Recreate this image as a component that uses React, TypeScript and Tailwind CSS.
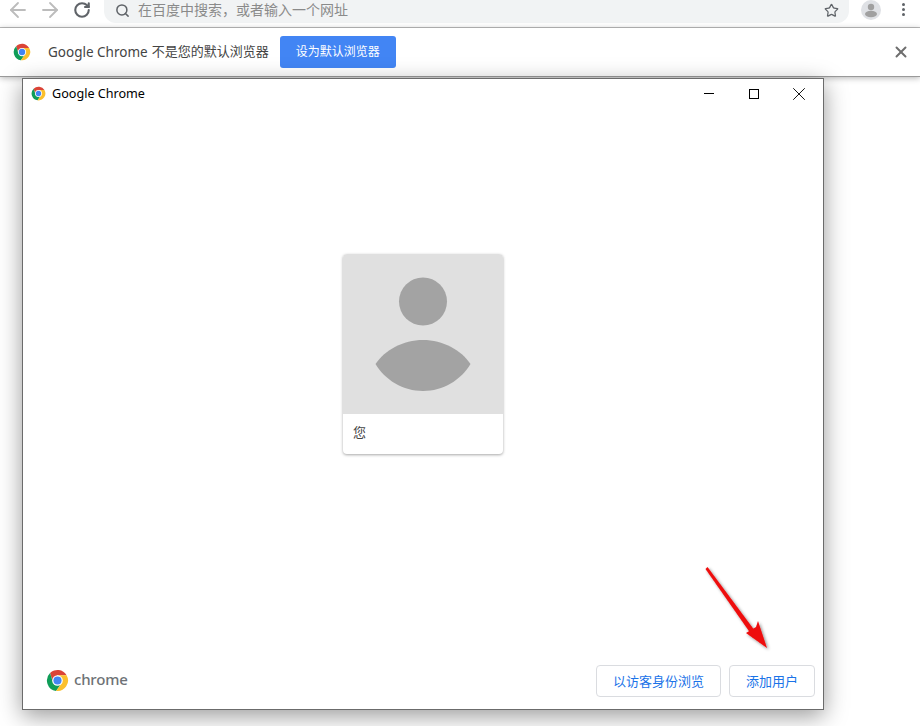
import { ArrowLeft, ArrowRight, RotateCw, Search, Star, X } from 'lucide-react';

const FONT = "font-['Noto_Sans','Noto_Sans_CJK_SC',sans-serif]";

function ChromeLogo({ className }: { className: string }) {
  return (
    <svg viewBox="0 0 48 48" className={className}>
      <path d="M8.4 8.5 A22 22 0 0 1 43 13 L24 13 L15 29 Z" fill="#db4437" />
      <path d="M8.4 8.5 A22 22 0 0 0 21 45.8 L33 29 L15 29 Z" fill="#0f9d58" />
      <path d="M43 13 A22 22 0 0 1 21 45.8 L33 29 L24 13 Z" fill="#fbc02d" />
      <circle cx="24" cy="24" r="11" fill="#fff" />
      <circle cx="24" cy="24" r="8.5" fill="#4285f4" />
    </svg>
  );
}

function Toolbar() {
  return (
    <div className="h-7 shrink-0 flex items-start bg-white border-b border-[#bdbdbd]">
      <div className="w-[104px] h-5 flex items-center pl-[2px]">
        <span className="w-8 flex justify-center">
          <ArrowLeft className="w-6 h-6 shrink-0 text-[#bcbcbc]" strokeWidth={1.8} />
        </span>
        <span className="w-8 flex justify-center">
          <ArrowRight className="w-6 h-6 shrink-0 text-[#bcbcbc]" strokeWidth={1.8} />
        </span>
        <span className="w-8 flex justify-center">
          <RotateCw className="w-[18px] h-[18px] shrink-0 text-[#5f6368]" strokeWidth={2.8} />
        </span>
      </div>
      <div className="w-[745px] h-[23px] bg-[#f1f3f4] rounded-br-[12px] rounded-bl-[12px] flex items-center pl-[11px] pr-[10px] pb-[3px]">
        <Search className="w-[15px] h-[15px] text-[#5f6368]" strokeWidth={2.4} />
        <span className="ml-[8px] text-[14px] leading-[18px] text-[#8a8a8a]">在百度中搜索，或者输入一个网址</span>
        <Star className="ml-auto w-[15px] h-[15px] text-[#5f6368]" strokeWidth={2} />
      </div>
      <div className="flex-1 flex items-center h-[19px] pl-[12px]">
        <svg viewBox="0 0 20 20" className="w-5 h-5">
          <circle cx="10" cy="10" r="10" fill="#dfe1e5" />
          <circle cx="10" cy="7" r="3.2" fill="#a0a0a0" />
          <ellipse cx="10" cy="14" rx="6" ry="3.2" fill="#a0a0a0" />
        </svg>
        <div className="ml-[21px] flex flex-col gap-[2px]">
          <span className="w-[3px] h-[3px] rounded-full bg-[#5f6368]" />
          <span className="w-[3px] h-[3px] rounded-full bg-[#5f6368]" />
          <span className="w-[3px] h-[3px] rounded-full bg-[#5f6368]" />
        </div>
      </div>
    </div>
  );
}

function Infobar() {
  return (
    <div className="h-[49px] shrink-0 flex items-center bg-white pl-[13px] pr-[10px] border-b border-[#9a9a9a] shadow-[0_1px_6px_rgba(0,0,0,0.3)] relative">
      <ChromeLogo className="w-[18px] h-[18px]" />
      <span className="ml-[17px] text-[13.5px] text-[#444]">Google Chrome</span>
      <span className="ml-[4px] text-[13px] text-[#444]">不是您的默认浏览器</span>
      <button className="ml-[11px] w-[116px] h-8 rounded-[3px] bg-[#4285f4] text-white text-[12px]">设为默认浏览器</button>
      <X className="ml-auto w-[18px] h-[18px] text-[#6e6e6e]" strokeWidth={2.6} />
    </div>
  );
}

function ProfileCard() {
  return (
    <div className="w-[160px] h-[200px] rounded-[4px] bg-white overflow-hidden shadow-[0_1px_3px_rgba(0,0,0,0.35)]">
      <div className="h-[160px] bg-[#e0e0e0] flex items-center justify-center">
        <svg viewBox="0 0 160 160" className="w-[160px] h-[160px]">
          <circle cx="80" cy="47.5" r="24" fill="#a3a3a3" />
          <path d="M32.5 110 C42 96 60 86 80 86 C100 86 118 96 127.5 110 C118 126 100 137 80 137 C60 137 42 126 32.5 110 Z" fill="#a3a3a3" />
        </svg>
      </div>
      <div className="h-10 flex items-center pl-[10px] pb-[2px] text-[13px] text-[#444]">您</div>
    </div>
  );
}

function Dialog() {
  return (
    <div className="relative ml-[22px] mt-[1px] w-[802px] h-[632px] bg-white border border-[#6b6b6b] flex flex-col shadow-[0_6px_22px_rgba(0,0,0,0.4)]">
      <div className="h-[29px] flex items-center pl-[8px] pr-[2px] shrink-0">
        <ChromeLogo className="w-[15px] h-[15px]" />
        <span className="ml-[6px] mt-[1px] text-[12.6px] text-black">Google Chrome</span>
        <div className="ml-auto flex items-center">
          <span className="w-[45px] flex justify-center"><span className="w-[10px] h-px bg-black" /></span>
          <span className="w-[45px] flex justify-center"><span className="w-[10px] h-[10px] border border-black" /></span>
          <span className="w-[45px] flex justify-center"><X className="w-[22px] h-[22px] shrink-0 text-black" strokeWidth={1} /></span>
        </div>
      </div>
      <div className="flex justify-center pt-[146px]">
        <ProfileCard />
      </div>
      <div className="mt-auto flex items-center pl-[23px] pr-[8px] pb-[12px]">
        <ChromeLogo className="w-[23px] h-[23px] -mt-[1px]" />
        <span className="ml-[5px] text-[15px] font-medium text-[#6e7276] -mt-[3px] tracking-[-0.2px]">chrome</span>
        <button className="ml-auto w-[125px] h-8 pt-[2px] rounded-[4px] border border-[#dadce0] bg-white text-[13px] text-[#1a73e8]">以访客身份浏览</button>
        <button className="ml-[8px] w-[86px] h-8 pt-[2px] rounded-[4px] border border-[#dadce0] bg-white text-[13px] text-[#1a73e8]">添加用户</button>
      </div>
      {/* red annotation arrow */}
      <svg viewBox="0 0 70 90" className="absolute left-[682px] top-[486px] w-[70px] h-[90px]">
        <defs>
          <filter id="s" x="-30%" y="-30%" width="160%" height="160%">
            <feDropShadow dx="1.5" dy="1.5" stdDeviation="1.5" floodColor="#000" floodOpacity="0.45" />
          </filter>
        </defs>
        <g filter="url(#s)">
          <path d="M2.5 2 L50 66 L46 69 L0.5 4 Z" fill="#ee0a0a" />
          <path d="M62 83 L41 68 L51 62 L53 56 Z" fill="#ee0a0a" />
        </g>
      </svg>
    </div>
  );
}

export default function App() {
  return (
    <div className={`${FONT} w-[920px] h-[726px] bg-white overflow-hidden flex flex-col`}>
      <Toolbar />
      <Infobar />
      <Dialog />
    </div>
  );
}
